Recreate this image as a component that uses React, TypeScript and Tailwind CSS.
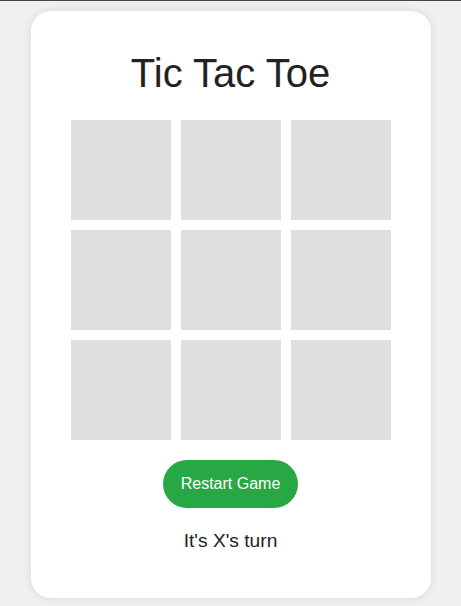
import { useState } from 'react';

const App = () => {
  const [board, setBoard] = useState<(string | null)[]>(Array(9).fill(null));
  const [player, setPlayer] = useState('X');

  const handleClick = (i: number) => {
    if (board[i]) {
      return;
    }
    const next = board.slice();
    next[i] = player;
    setBoard(next);
    setPlayer(player === 'X' ? 'O' : 'X');
  };

  const restart = () => {
    setBoard(Array(9).fill(null));
    setPlayer('X');
  };

  return (
    <div className="min-h-[606px] bg-[#f0f0f0] font-['Liberation_Sans',Arial,sans-serif]">
      <div className="h-px bg-[#444]" />
      <div className="flex justify-center pt-[10px]">
        <div className="w-[400px] bg-white rounded-[20px] shadow-[0_0_10px_rgba(0,0,0,0.1)] pt-[39px] pb-[46px] flex flex-col items-center">
          <h1 className="text-[40px] leading-[46px] text-[#222]">Tic Tac Toe</h1>
          <div className="grid grid-cols-[repeat(3,100px)] gap-[10px] mt-[24px] ml-[1px]">
            {board.map((cell, i) => (
              <div
                key={i}
                onClick={() => handleClick(i)}
                className="w-[100px] h-[100px] bg-[#dfdfdf] flex items-center justify-center text-[40px] text-[#222] cursor-pointer"
              >
                {cell}
              </div>
            ))}
          </div>
          <button
            onClick={restart}
            className="mt-[20px] h-[48px] px-[18px] rounded-full bg-[#28a745] text-white text-[16px] cursor-pointer"
          >
            Restart Game
          </button>
          <div className="mt-[22px] text-[19.2px] leading-[22px] text-[#222]">It's {player}'s turn</div>
        </div>
      </div>
    </div>
  );
};

export default App;
